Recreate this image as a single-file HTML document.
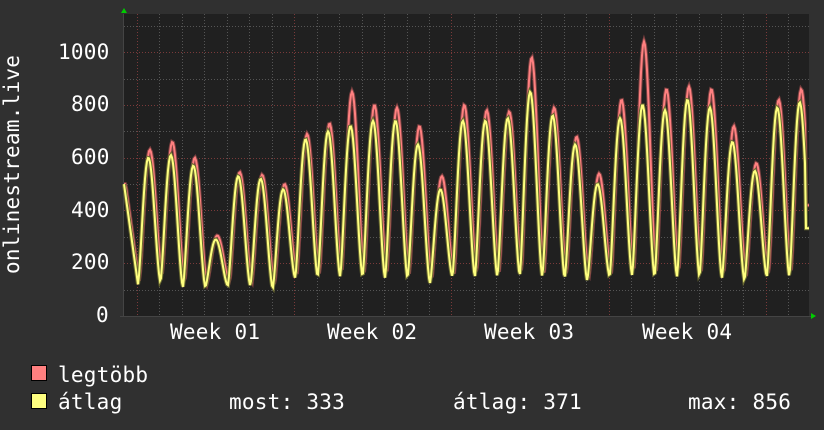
<!DOCTYPE html>
<html><head><meta charset="utf-8">
<style>
html,body{margin:0;padding:0;background:#303030;}
#c{position:relative;width:824px;height:430px;background:#303030;overflow:hidden;font-family:"DejaVu Sans Mono","Liberation Mono",monospace;color:#fff;font-size:21px;}
.t{position:absolute;white-space:pre;line-height:1;letter-spacing:0.25px}
.sq{position:absolute;width:14px;height:14px;border:1px solid #000}
</style></head><body>
<div id="c">
<svg id="g" width="824" height="430" style="position:absolute;left:0;top:0"></svg>
<div class="t" style="left:2px;top:274px;transform:rotate(-90deg);transform-origin:0 0;">onlinestream.live</div>
<div class="t" style="left:58px;top:42px">1000</div>
<div class="t" style="left:71px;top:94px">800</div>
<div class="t" style="left:71px;top:147px">600</div>
<div class="t" style="left:71px;top:200px">400</div>
<div class="t" style="left:71px;top:252px">200</div>
<div class="t" style="left:96px;top:305px">0</div>
<div class="t" style="left:170px;top:322px">Week 01</div>
<div class="t" style="left:327px;top:322px">Week 02</div>
<div class="t" style="left:484px;top:322px">Week 03</div>
<div class="t" style="left:642px;top:322px">Week 04</div>
<div class="sq" style="left:31px;top:365px;background:#ff8080"></div>
<div class="sq" style="left:31px;top:393px;background:#ffff80"></div>
<div class="t" style="left:58px;top:365px">legtöbb</div>
<div class="t" style="left:58px;top:392px">átlag</div>
<div class="t" style="left:229px;top:392px">most: 333</div>
<div class="t" style="left:453px;top:392px">átlag: 371</div>
<div class="t" style="left:688px;top:392px">max: 856</div>
</div>
<script>
var s='';
var L=124,R=809,T=14,B=316;
function Y(v){return B-v*0.2638;}
s+='<rect x="'+L+'" y="'+T+'" width="'+(R-L)+'" height="'+(B-T)+'" fill="#202020"/>';
s+='<line x1="123.5" y1="14" x2="123.5" y2="317" stroke="#444"/>';
for(var v=100;v<=1100;v+=100){var y=Math.round(Y(v))+0.5;if(y<T)continue;
 var maj=v%200==0;
 s+='<line x1="'+L+'" y1="'+y+'" x2="'+R+'" y2="'+y+'" stroke="'+(maj?'#7a3a3a':'#555')+'" stroke-dasharray="1,2"/>';}
for(var i=0;i<31;i++){var x=Math.round(137+i*22.46)+0.5;if(x>R)break;
 var maj=(i%7==0);
 s+='<line x1="'+x+'" y1="'+T+'" x2="'+x+'" y2="'+B+'" stroke="'+(maj?'#7a3a3a':'#555')+'" stroke-dasharray="1,2"/>';}
s+='<line x1="120" y1="316.5" x2="812" y2="316.5" stroke="#444"/>';
s+='<polygon points="121,13 127,13 124,8" fill="#0c0"/>';
s+='<polygon points="811,313 811,319 816,316" fill="#0c0"/>';
var pk=[[630,600],[660,610],[600,570],[305,290],[545,530],[535,520],[500,480],[690,670],[730,700],[850,720],[800,740],[790,740],[720,650],[530,480],[800,740],[780,740],[775,750],[980,850],[790,760],[680,650],[540,500],[820,750],[1040,800],[860,780],[870,820],[860,790],[720,660],[580,550],[820,790],[860,810],[420,333]];
var tr=[[150,120],[160,130],[130,110],[125,110],[130,115],[130,115],[120,105],[160,145],[160,150],[170,150],[165,150],[160,145],[160,145],[140,125],[160,150],[165,150],[165,150],[170,155],[160,150],[160,145],[150,135],[160,150],[170,155],[170,150],[170,150],[170,150],[160,145],[150,135],[160,150],[170,150]];
function val(x,k){var p=(x-138)/22.46;var d=Math.floor(p);var f=p-d;
 var di=Math.max(0,Math.min(pk.length-1,d));var ti=Math.max(0,Math.min(tr.length-1,d));var ti2=Math.max(0,Math.min(tr.length-1,d+1));
 var P=pk[di][k],t1=tr[ti][k],t2=tr[ti2][k];
 if(d<0){var w=500-(x-124)/14*380;return w>120?w:120;}
 var g=Math.pow((1-Math.cos(2*Math.PI*Math.pow(f,0.9)))/2,0.8);
 var base=t1+(t2-t1)*f;
 return base+(P-base)*g;}
function path(k){var a=[];for(var x=L;x<=R;x++){var xx=k?x:x-1.5;if(xx<L)xx=L;var v=val(xx,k);if(x>=806)v=pk[30][k];a.push(x+','+Y(v).toFixed(1));}return a.join(' ');}
s+='<polyline points="'+path(0)+'" fill="none" stroke="#7a4040" stroke-width="4"/>';
s+='<polyline points="'+path(0)+'" fill="none" stroke="#ff8080" stroke-width="2"/>';
s+='<polyline points="'+path(1)+'" fill="none" stroke="#6a6a30" stroke-width="4"/>';
s+='<polyline points="'+path(1)+'" fill="none" stroke="#ffff80" stroke-width="2"/>';
document.getElementById('g').innerHTML=s;
</script>
</body></html>
